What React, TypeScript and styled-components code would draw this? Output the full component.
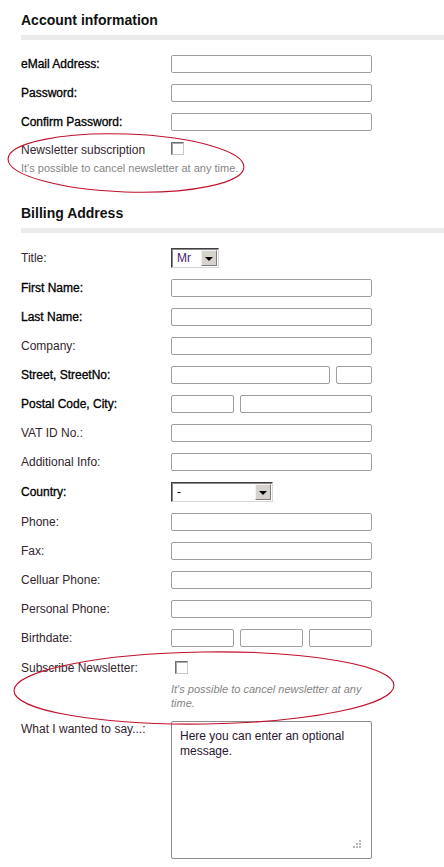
import styled, { createGlobalStyle } from "styled-components";

const GlobalStyle = createGlobalStyle`
  html, body {
    margin: 0;
    padding: 0;
    background: #fff;
  }
  body {
    font-family: "Liberation Sans", Arial, sans-serif;
    font-size: 12px;
    color: #333;
  }
`;

const Page = styled.div`
  position: relative;
  width: 444px;
  padding: 12px 0 10px 21px;
  box-sizing: border-box;
`;

const Section = styled.section<{ $gap?: number }>`
  margin-top: ${(p) => p.$gap ?? 0}px;
`;

const SectionTitle = styled.h2`
  margin: 0;
  font-size: 14px;
  line-height: 17px;
  font-weight: bold;
  color: #111;
`;

const Rule = styled.div`
  height: 5px;
  margin-top: 6px;
  background: #ebebeb;
`;

const FieldList = styled.div`
  display: grid;
  row-gap: 11px;
  margin-top: 15px;
`;

const Row = styled.div<{ $align?: string }>`
  display: grid;
  grid-template-columns: 150px 201px;
  align-items: ${(p) => p.$align ?? "center"};
`;

const Label = styled.label<{ $required?: boolean; $top?: number }>`
  line-height: 14px;
  padding-top: ${(p) => p.$top ?? 0}px;
  color: ${(p) => (p.$required ? "#000" : "#33262f")};
  -webkit-text-stroke: ${(p) => (p.$required ? "0.3px #000" : "0")};
  white-space: nowrap;
`;

const InputGroup = styled.div`
  display: flex;
  gap: 6px;
`;

const TextInput = styled.input<{ $w?: number }>`
  display: block;
  width: ${(p) => (p.$w ? `${p.$w}px` : "100%")};
  height: 18px;
  box-sizing: border-box;
  margin: 0;
  padding: 0 3px;
  border: 1px solid #9e9e9e;
  border-radius: 2px;
  background: #fff;
  font: inherit;
`;

const SelectBox = styled.div<{ $w: number }>`
  display: flex;
  align-items: center;
  justify-content: space-between;
  width: ${(p) => p.$w}px;
  height: 20px;
  box-sizing: border-box;
  border: 1px solid;
  border-color: #404040 #d6d6d6 #d6d6d6 #404040;
  box-shadow: inset 1px 1px 0 #8a8a8a;
  background: #fff;
  padding: 1px 1px 1px 5px;
`;

const SelectValue = styled.span<{ $color?: string }>`
  font-size: 12px;
  line-height: 14px;
  color: ${(p) => p.$color ?? "#000"};
`;

const SelectButton = styled.span`
  display: flex;
  align-items: center;
  justify-content: center;
  width: 16px;
  height: 16px;
  box-sizing: border-box;
  border: 1px solid;
  border-color: #f4f4f4 #7d7d7d #7d7d7d #f4f4f4;
  background: #d6d3cc;

  &::after {
    content: "";
    border-left: 4px solid transparent;
    border-right: 4px solid transparent;
    border-top: 4px solid #000;
    margin-top: 1px;
  }
`;

const CheckBox = styled.span<{ $ml?: number; $mt?: number }>`
  display: block;
  width: 13px;
  height: 13px;
  box-sizing: border-box;
  margin: ${(p) => p.$mt ?? 0}px 0 0 ${(p) => p.$ml ?? 0}px;
  border: 1px solid #6f6f6f;
  border-right-color: #c8c8c8;
  border-bottom-color: #c8c8c8;
  box-shadow: inset 1px 1px 0 #a8a8a8;
  background: #fff;
`;

const Hint = styled.p<{ $italic?: boolean; $top?: number }>`
  margin: ${(p) => p.$top ?? 0}px 0 0;
  font-size: 11px;
  line-height: 14px;
  color: #858585;
  font-style: ${(p) => (p.$italic ? "italic" : "normal")};
`;

const NewsletterBlock = styled.div``;

const FieldStack = styled.div`
  display: flex;
  flex-direction: column;
`;

const MessageWrap = styled.div`
  position: relative;
  width: 201px;
  height: 138px;
`;

const MessageArea = styled.textarea`
  display: block;
  width: 100%;
  height: 100%;
  box-sizing: border-box;
  margin: 0;
  padding: 7px 8px;
  border: 1px solid #8c8c8c;
  border-radius: 2px;
  resize: none;
  font-family: "Liberation Sans", Arial, sans-serif;
  font-size: 12px;
  line-height: 15px;
  color: #2a1530;
`;

const ResizeGrip = styled.svg`
  position: absolute;
  right: 10px;
  bottom: 10px;
`;

const Annotation = styled.svg<{ $left: number; $top: number }>`
  position: absolute;
  left: ${(p) => p.$left}px;
  top: ${(p) => p.$top}px;
  pointer-events: none;
  overflow: visible;
`;

type SelectProps = { width: number; value: string; color?: string };

const Select = ({ width, value, color }: SelectProps) => (
  <SelectBox $w={width}>
    <SelectValue $color={color}>{value}</SelectValue>
    <SelectButton />
  </SelectBox>
);

type FieldProps = { label: string; required?: boolean; children?: React.ReactNode };

const Field = ({ label, required, children }: FieldProps) => (
  <Row>
    <Label $required={required}>{label}</Label>
    <div>{children ?? <TextInput />}</div>
  </Row>
);

export default function App() {
  return (
    <Page>
      <GlobalStyle />

      <Section>
        <SectionTitle>Account information</SectionTitle>
        <Rule />
        <FieldList>
          <Field label="eMail Address:" required />
          <Field label="Password:" required />
          <Field label="Confirm Password:" required />
          <NewsletterBlock>
            <Row $align="start">
              <Label $top={1}>Newsletter subscription</Label>
              <CheckBox />
            </Row>
            <Hint $top={4}>It's possible to cancel newsletter at any time.</Hint>
          </NewsletterBlock>
        </FieldList>
      </Section>

      <Section $gap={30}>
        <SectionTitle>Billing Address</SectionTitle>
        <Rule />
        <FieldList>
          <Field label="Title:">
            <Select width={48} value="Mr" color="#4a2070" />
          </Field>
          <Field label="First Name:" required />
          <Field label="Last Name:" required />
          <Field label="Company:" />
          <Field label="Street, StreetNo:" required>
            <InputGroup>
              <TextInput $w={159} />
              <TextInput $w={36} />
            </InputGroup>
          </Field>
          <Field label="Postal Code, City:" required>
            <InputGroup>
              <TextInput $w={63} />
              <TextInput $w={132} />
            </InputGroup>
          </Field>
          <Field label="VAT ID No.:" />
          <Field label="Additional Info:" />
          <Field label="Country:" required>
            <Select width={102} value="-" />
          </Field>
          <Field label="Phone:" />
          <Field label="Fax:" />
          <Field label="Celluar Phone:" />
          <Field label="Personal Phone:" />
          <Field label="Birthdate:">
            <InputGroup>
              <TextInput $w={63} />
              <TextInput $w={63} />
              <TextInput $w={63} />
            </InputGroup>
          </Field>
          <Row $align="start">
            <Label $top={3}>Subscribe Newsletter:</Label>
            <FieldStack>
              <CheckBox $ml={4} $mt={3} />
              <Hint $italic $top={8}>
                It's possible to cancel newsletter at any time.
              </Hint>
            </FieldStack>
          </Row>
          <Row $align="start">
            <Label $top={1}>What I wanted to say...:</Label>
            <MessageWrap>
              <MessageArea defaultValue="Here you can enter an optional message." />
              <ResizeGrip width="9" height="9" viewBox="0 0 9 9">
                <g fill="#b5b5b5">
                  <rect x="6" y="0" width="2" height="2" />
                  <rect x="3" y="3" width="2" height="2" />
                  <rect x="6" y="3" width="2" height="2" />
                  <rect x="0" y="6" width="2" height="2" />
                  <rect x="3" y="6" width="2" height="2" />
                  <rect x="6" y="6" width="2" height="2" />
                </g>
              </ResizeGrip>
            </MessageWrap>
          </Row>
        </FieldList>
      </Section>

      <Annotation $left={0} $top={128} width="260" height="72" viewBox="0 0 260 72">
        <ellipse
          cx="126"
          cy="35"
          rx="118"
          ry="29"
          transform="rotate(2 126 35)"
          fill="none"
          stroke="#c0122c"
          strokeWidth="1.1"
        />
      </Annotation>
      <Annotation $left={0} $top={644} width="410" height="90" viewBox="0 0 410 90">
        <ellipse
          cx="204"
          cy="44"
          rx="190"
          ry="36"
          transform="rotate(-0.8 204 44)"
          fill="none"
          stroke="#c0122c"
          strokeWidth="1.1"
        />
      </Annotation>
    </Page>
  );
}
